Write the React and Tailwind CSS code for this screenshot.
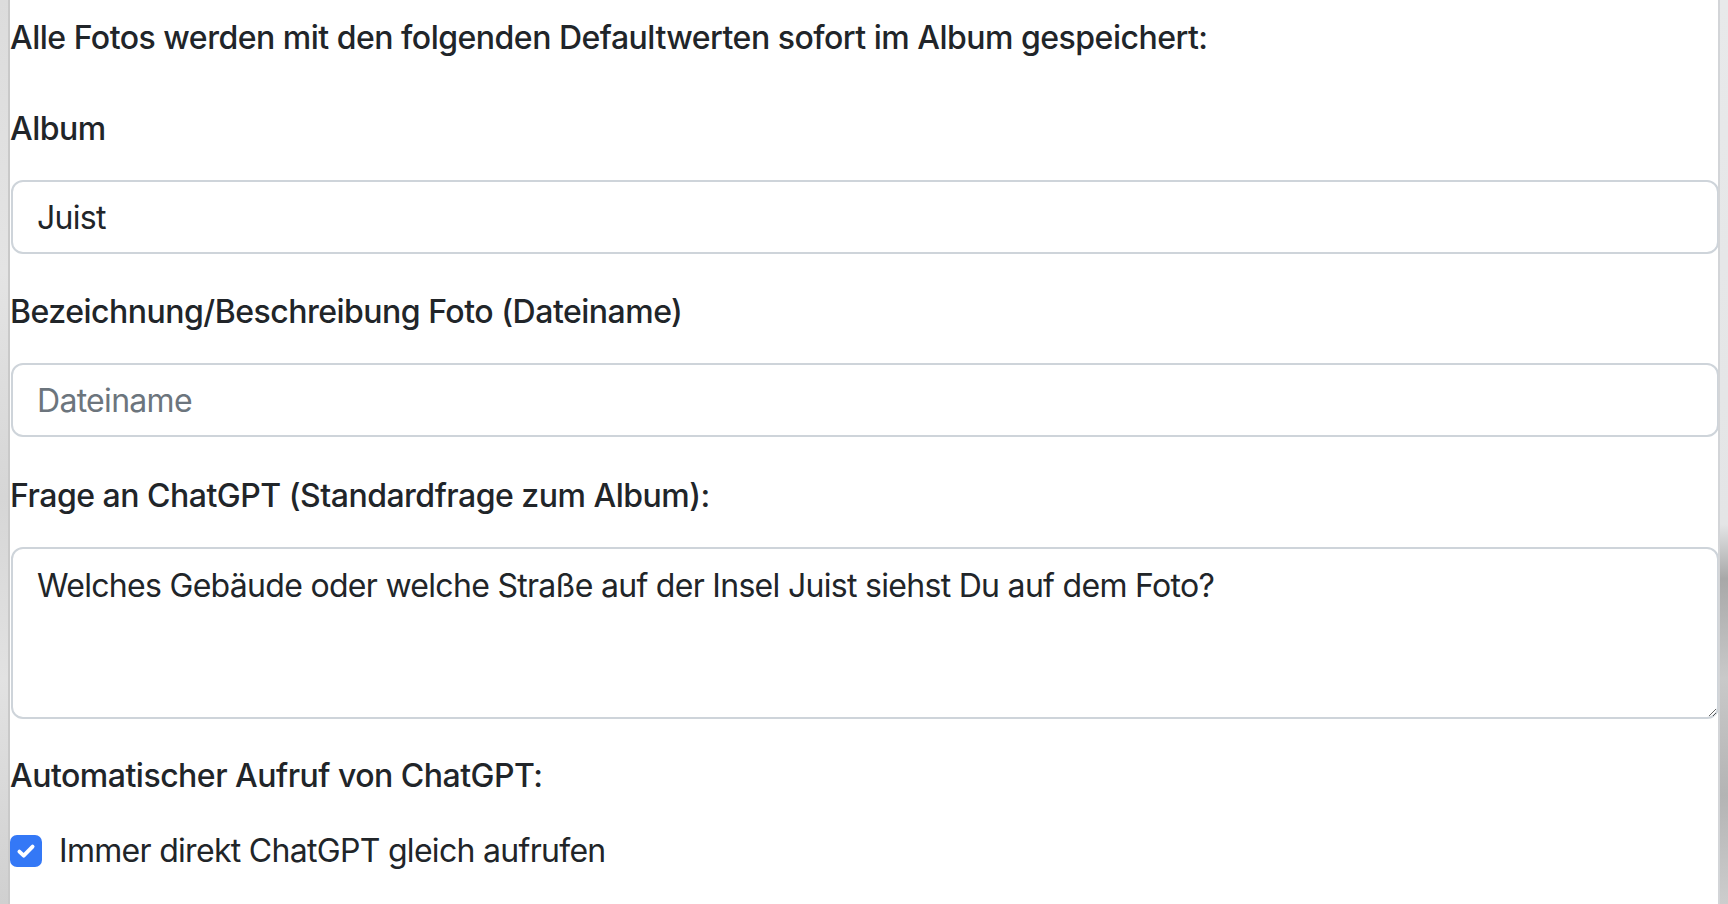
import React, { useState } from "react";

const labelCls =
  "block pt-[2px] text-[32px] font-medium leading-[48px] tracking-[-0.5px] text-[#212529]";
const fieldCls =
  "block w-full rounded-[12px] border-2 border-[#ced4da] bg-white px-[24px] py-[12px] text-[32px] leading-[48px] tracking-[-0.7px] text-[#212529] placeholder:text-[#6c757d] outline-none";

const App = () => {
  const [album, setAlbum] = useState("Juist");
  const [fileName, setFileName] = useState("");
  const [question, setQuestion] = useState(
    "Welches Gebäude oder welche Straße auf der Insel Juist siehst Du auf dem Foto?"
  );
  const [autoCall, setAutoCall] = useState(true);

  return (
    <div
      className="flex h-[904px] w-full overflow-hidden bg-white"
      style={{ fontFamily: "Inter, 'Noto Sans', sans-serif" }}
    >
      {/* photo background peeking out on the left */}
      <div className="w-[8px] shrink-0 bg-[linear-gradient(180deg,#dcdcdc_0%,#e4e4e4_30%,#d6d6d6_55%,#e2e2e2_75%,#d0d0d0_100%)]" />
      <div className="w-[2px] shrink-0 bg-[#c9c9c9]" />

      <div className="min-w-0 flex-1 pt-[14px]">
        <p className="text-[32px] font-medium leading-[48px] tracking-[-0.5px] text-[#212529] mb-[41px]">
          Alle Fotos werden mit den folgenden Defaultwerten sofort im Album
          gespeichert:
        </p>

        <label className={labelCls + " mb-[27px]"}>Album</label>
        <input
          type="text"
          className={fieldCls + " h-[74px] ml-[1px] w-[1706px] mb-[32px]"}
          value={album}
          onChange={(e) => setAlbum(e.target.value)}
        />

        <label className={labelCls + " mb-[27px]"}>
          Bezeichnung/Beschreibung Foto (Dateiname)
        </label>
        <input
          type="text"
          placeholder="Dateiname"
          className={fieldCls + " h-[74px] ml-[1px] w-[1706px] mb-[33px]"}
          value={fileName}
          onChange={(e) => setFileName(e.target.value)}
        />

        <label className={labelCls + " mb-[27px]"}>
          Frage an ChatGPT (Standardfrage zum Album):
        </label>
        <textarea
          className={fieldCls + " h-[172px] ml-[1px] w-[1706px] pt-[13px] resize-y mb-[31px]"}
          value={question}
          onChange={(e) => setQuestion(e.target.value)}
        />

        <label className={labelCls + " mb-[27px]"}>
          Automatischer Aufruf von ChatGPT:
        </label>
        <div
          className="flex h-[48px] items-center gap-[17px] cursor-pointer select-none"
          onClick={() => setAutoCall(!autoCall)}
        >
          <span
            className={
              autoCall
                ? "flex h-[32px] w-[32px] items-center justify-center rounded-[7px] bg-[#3478f6]"
                : "flex h-[32px] w-[32px] items-center justify-center rounded-[7px] border-2 border-[#ced4da] bg-white"
            }
          >
            {autoCall && (
              <svg width="24" height="24" viewBox="0 0 20 20" fill="none">
                <path
                  d="M4.5 10.5l3.6 3.4L15.5 6.3"
                  stroke="white"
                  strokeWidth="3.2"
                  strokeLinecap="round"
                  strokeLinejoin="round"
                />
              </svg>
            )}
          </span>
          <span className="text-[32px] leading-[48px] tracking-[-0.7px] text-[#212529]">
            Immer direkt ChatGPT gleich aufrufen
          </span>
        </div>
      </div>

      <div className="w-[2px] shrink-0 bg-[#d3d5d8]" />
      {/* photo background peeking out on the right */}
      <div className="w-[8px] shrink-0 bg-[linear-gradient(180deg,#e8e9ea_0%,#e4e5e6_58%,#a8a8a8_64%,#c9c9c9_75%,#b4b4b4_88%,#cdcdcd_100%)]" />
    </div>
  );
};

export default App;
